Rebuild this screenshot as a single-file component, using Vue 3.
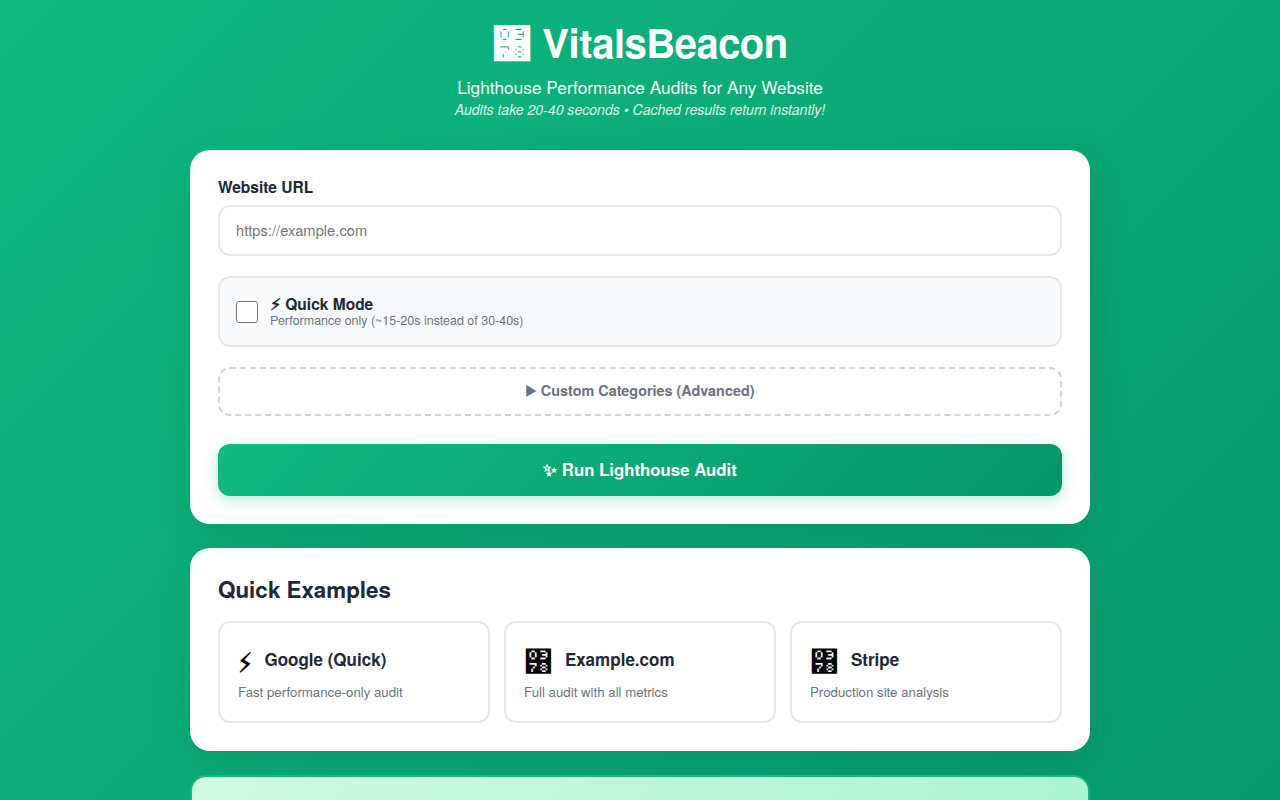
<script setup>
const examples = [
  { icon: '⚡\uFE0E', name: 'Google (Quick)', desc: 'Fast performance-only audit', missing: false },
  { icon: '\u0378', name: 'Example.com', desc: 'Full audit with all metrics', missing: true },
  { icon: '\u0378', name: 'Stripe', desc: 'Production site analysis', missing: true }
]
const titleIcon = '\u0378'
</script>

<template>
  <div class="page">
    <header class="header">
      <h1 class="title">{{ titleIcon }} VitalsBeacon</h1>
      <p class="subtitle">Lighthouse Performance Audits for Any Website</p>
      <p class="note">Audits take 20-40 seconds • Cached results return instantly!</p>
    </header>

    <section class="card">
      <label class="label" for="url">Website URL</label>
      <input id="url" class="input" type="text" placeholder="https://example.com" />
      <label class="quick">
        <input class="check" type="checkbox" />
        <span class="quick-text">
          <span class="quick-title">⚡&#xFE0E; Quick Mode</span>
          <span class="quick-desc">Performance only (~15-20s instead of 30-40s)</span>
        </span>
      </label>
      <button class="custom" type="button">▶&#xFE0E; Custom Categories (Advanced)</button>
      <button class="run" type="button">✨&#xFE0E; Run Lighthouse Audit</button>
    </section>

    <section class="card examples">
      <h2 class="examples-title">Quick Examples</h2>
      <div class="grid">
        <div v-for="e in examples" :key="e.name" class="example">
          <div class="example-head">
            <span class="example-icon">{{ e.icon }}</span>
            <span class="example-name">{{ e.name }}</span>
          </div>
          <div class="example-desc">{{ e.desc }}</div>
        </div>
      </div>
    </section>

    <section class="banner"></section>
  </div>
</template>

<style>
html, body { margin: 0; padding: 0; }
body { background: #059669; }
</style>

<style scoped>
.page {
  box-sizing: border-box;
  height: 800px;
  overflow: hidden;
  padding: 18px 190px 0;
  background: linear-gradient(135deg, #10b981 0%, #059669 100%) 0 0 / 100% 1000px no-repeat;
  font-family: "TeX Gyre Heros", FreeSans, "Liberation Sans", sans-serif;
  color: #1f2937;
}
.header { text-align: center; color: #fff; margin-bottom: 32px; }
.title { margin: 0 0 10px; font-size: 40px; line-height: 48px; font-weight: 700; letter-spacing: -0.5px; }
.subtitle { margin: 0; font-size: 17.28px; line-height: 22px; opacity: .95; }
.note { margin: 2px 0 0; font-size: 14.08px; line-height: 18px; font-style: italic; opacity: .85; }
.card {
  box-sizing: border-box;
  background: #fff;
  border-radius: 20px;
  padding: 28px;
  box-shadow: 0 10px 40px rgba(0, 0, 0, .1);
  margin-bottom: 24px;
}
.label { display: block; font-size: 15.5px; line-height: 19px; font-weight: 700; margin-bottom: 8px; }
.input {
  display: block; box-sizing: border-box; width: 100%; height: 51px;
  border: 2px solid #e5e7eb; border-radius: 12px; padding: 0 16px 2px;
  font: 14.72px "TeX Gyre Heros", FreeSans, sans-serif; outline: none; background: #fff;
}
.input::placeholder { color: #757575; opacity: 1; }
.quick {
  display: flex; align-items: center; gap: 12px; box-sizing: border-box; height: 71px;
  margin-top: 20px; padding: 0 16px; background: #f9fafb;
  border: 2px solid #e5e7eb; border-radius: 12px;
}
.check {
  appearance: none; box-sizing: border-box; width: 22px; height: 22px; margin: 0;
  background: #fff; border: 1px solid #767676; border-radius: 3px;
}
.quick-text { display: flex; flex-direction: column; }
.quick-title { font-size: 15.5px; line-height: 18px; font-weight: 700; }
.quick-desc { font-size: 12.48px; line-height: 15px; color: #6b7280; }
.custom {
  display: block; box-sizing: border-box; width: 100%; height: 49px; margin-top: 20px; padding: 0 0 3px;
  background: transparent; border: 2px dashed #d1d5db; border-radius: 12px;
  font: 700 14.4px "TeX Gyre Heros", FreeSans, sans-serif; color: #6b7280; cursor: pointer;
}
.run {
  display: block; box-sizing: border-box; width: 100%; height: 52px; margin-top: 28px; padding: 0 0 3px;
  border: 0; border-radius: 12px; color: #fff;
  background: linear-gradient(135deg, #10b981 0%, #059669 100%);
  box-shadow: 0 4px 15px rgba(16, 185, 129, .3);
  font: 700 16.8px "TeX Gyre Heros", FreeSans, sans-serif; cursor: pointer;
}
.examples-title { margin: 0 0 18px; font-size: 22.4px; line-height: 27px; font-weight: 700; }
.grid { display: grid; grid-template-columns: repeat(3, 1fr); gap: 14px; }
.example {
  box-sizing: border-box; height: 102px; padding: 18px; background: #fff;
  border: 2px solid #e5e7eb; border-radius: 12px;
}
.example-head { display: flex; align-items: center; gap: 12px; height: 36px; }
.example-icon { font-size: 28.8px; color: #000; }
.example-name { font-size: 17px; font-weight: 700; }
.example-desc { margin-top: 6px; font-size: 13.28px; line-height: 18px; color: #6b7280; }
.banner {
  box-sizing: border-box; height: 120px; border: 2px solid #10b981; border-radius: 16px;
  background: linear-gradient(135deg, #d1fae5 0%, #a7f3d0 100%);
}
</style>
